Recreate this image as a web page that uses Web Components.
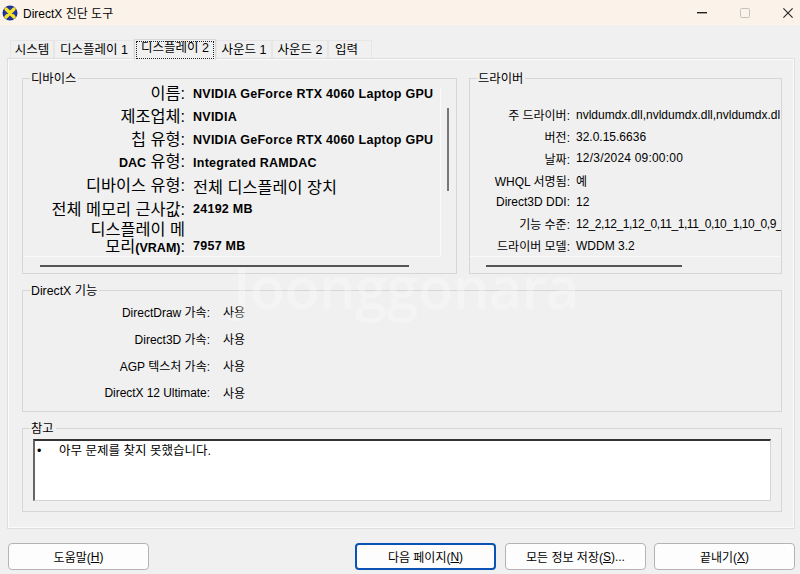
<!DOCTYPE html>
<html><head><meta charset="utf-8"><style>
html,body{margin:0;padding:0;background:#f0f0f0}
body{width:800px;height:574px;overflow:hidden;font:12px "Noto Sans CJK KR","Liberation Sans",sans-serif;color:#000}
</style></head><body>
<dx-window></dx-window>
<script>
const F='"Liberation Sans","Noto Sans CJK KR",sans-serif';
class Base extends HTMLElement{constructor(){super();this.attachShadow({mode:'open'}).innerHTML=this.constructor.html}}
class TitleBar extends Base{static html=`<style>
:host{display:flex;align-items:center;height:25px;background:#fbf3ea;font:12px ${F};color:#000}
svg{display:block}.ic{margin:0 5px 0 2px}.sp{flex:1}
</style>
<svg class="ic" width="16" height="16" viewBox="0 0 16 16"><circle cx="8" cy="8" r="7.5" fill="#1c2f8f"/><circle cx="8" cy="8" r="6" fill="#27399c"/><path d="M4 4 8 8l4-4M4 12 8 8l4 4" stroke="#f6e32a" stroke-width="3.4" fill="none" stroke-linecap="round"/></svg>
<span>DirectX 진단 도구</span><span class="sp"></span>
<svg width="10" height="2" viewBox="0 0 10 2" style="margin-right:33px"><rect width="10" height="1.4" fill="#222"/></svg>
<svg width="10" height="10" viewBox="0 0 10 10" style="margin-right:33px"><rect x=".5" y=".5" width="9" height="9" rx="1" fill="none" stroke="#c4c2be"/></svg>
<svg width="10" height="10" viewBox="0 0 10 10" style="margin-right:7px"><path d="M.4.4l9.2 9.2M9.6.4.4 9.6" stroke="#222" stroke-width="1.1"/></svg>`}
class TabBar extends Base{static html=`<style>
:host{display:flex;align-items:flex-end;height:20px;margin:14px 0 0 10px;font:12.5px ${F};color:#000;position:relative;z-index:1}
</style><slot></slot>`}
class TabItem extends Base{static html=`<style>
:host{display:block;height:18px;box-sizing:border-box;border:1px solid #e6e6e6;border-bottom:0;text-align:center;line-height:18px;background:#f0f0f0;margin-bottom:1px;white-space:nowrap}
:host([active]){height:21px;margin:0 0 -1px 0;border-color:#d8d8d8;padding:1px 1px 0}
span{display:block}
:host([active]) span{outline:1px dotted #222;outline-offset:-1px;height:18px;line-height:15px}
</style><span><slot></slot></span>`}
class TabPanel extends Base{static html=`<style>
:host{display:grid;grid-template-columns:435px 313px;column-gap:12px;grid-template-rows:196px 122px 84px;row-gap:16px;box-sizing:border-box;width:786px;height:469px;margin:0 0 0 8px;border:1px solid #fbfbfb;outline:1px solid #dedede;padding:18px 12px 0 13px}
</style><slot></slot>`}
class GroupBox extends Base{static html=`<style>
:host{display:block;position:relative;box-sizing:border-box;border:1px solid #d6d6d6;font:12px ${F};color:#000}
.l{position:absolute;left:7px;top:-7px;background:#f0f0f0;padding:0 2px 0 1px;font-size:12.3px;line-height:15px;white-space:nowrap}
</style><div class="l"></div><slot></slot>`;
connectedCallback(){this.shadowRoot.querySelector('.l').textContent=this.getAttribute('label')}}
class DeviceList extends Base{static html=`<style>
:host{display:block;height:100%;position:relative;overflow:hidden;font:12px ${F}}
.rows{display:grid;grid-template-columns:162px 1fr;column-gap:8px;grid-template-rows:repeat(6,23.1px) 34px;padding-top:3px;align-items:center}
.k{text-align:right;font-size:16.3px;white-space:nowrap;line-height:17px}
.k b{font-size:12.5px}
.v{font-weight:700;font-size:12.5px;letter-spacing:.26px;white-space:nowrap}
.v.h{font-weight:400;font-size:16.3px;letter-spacing:0}
.multi{line-height:17px;align-self:start}
.last{align-self:end;line-height:17px}
.sep{position:absolute;left:0;width:417px;bottom:16px;border-bottom:1px solid #fafafa}
.sepv{position:absolute;left:417px;top:8px;bottom:16px;border-left:1px solid #fafafa}
.vb{position:absolute;right:7px;top:29px;width:2px;height:83px;background:#777}
.hb{position:absolute;left:17px;width:369px;bottom:6px;height:2px;background:#555}
</style>
<div class="rows">
<div class="k">이름:</div><div class="v">NVIDIA GeForce RTX 4060 Laptop GPU</div>
<div class="k">제조업체:</div><div class="v">NVIDIA</div>
<div class="k">칩 유형:</div><div class="v">NVIDIA GeForce RTX 4060 Laptop GPU</div>
<div class="k"><b>DAC</b> 유형:</div><div class="v">Integrated RAMDAC</div>
<div class="k">디바이스 유형:</div><div class="v h">전체 디스플레이 장치</div>
<div class="k">전체 메모리 근사값:</div><div class="v">24192 MB</div>
<div class="k multi">디스플레이 메<br>모리<b>(VRAM)</b>:</div><div class="v last">7957 MB</div>
</div><div class="sep"></div><div class="sepv"></div><div class="vb"></div><div class="hb"></div>`}
class DriverList extends Base{static html=`<style>
:host{display:block;height:100%;position:relative;overflow:hidden;font:12px ${F}}
.rows{display:grid;grid-template-columns:100px 1fr;column-gap:6px;grid-auto-rows:21.8px;padding-top:25px;align-items:center}
.k{text-align:right;white-space:nowrap}.v{white-space:nowrap}
.sep{position:absolute;left:0;right:0;bottom:16px;border-bottom:1px solid #fafafa}
.hb{position:absolute;left:16px;width:196px;bottom:6px;height:2px;background:#555}
</style><div class="rows">
<div class="k">주 드라이버:</div><div class="v">nvldumdx.dll,nvldumdx.dll,nvldumdx.dl</div>
<div class="k">버전:</div><div class="v">32.0.15.6636</div>
<div class="k">날짜:</div><div class="v" style="letter-spacing:.2px">12/3/2024 09:00:00</div>
<div class="k">WHQL 서명됨:</div><div class="v">예</div>
<div class="k">Direct3D DDI:</div><div class="v">12</div>
<div class="k">기능 수준:</div><div class="v" style="letter-spacing:-.42px">12_2,12_1,12_0,11_1,11_0,10_1,10_0,9_</div>
<div class="k">드라이버 모델:</div><div class="v">WDDM 3.2</div>
</div><div class="sep"></div><div class="hb"></div>`}
class FeatureList extends Base{static html=`<style>
:host{display:grid;grid-template-columns:187px 1fr;column-gap:13px;grid-auto-rows:27.1px;align-items:center;padding-top:7px;font:12px ${F}}
.k{text-align:right}
</style>
<div class="k">DirectDraw 가속:</div><div>사용</div>
<div class="k">Direct3D 가속:</div><div>사용</div>
<div class="k">AGP 텍스처 가속:</div><div>사용</div>
<div class="k" style="letter-spacing:-.06px">DirectX 12 Ultimate:</div><div>사용</div>`}
class NoteBox extends Base{static html=`<style>
:host{box-sizing:border-box;width:738px;height:62px;margin:10px 0 0 10px;background:#fff;border:1px solid #d4d4d4;border-top:2px solid #333;border-left:2px solid #666;font:12.5px/20px ${F};display:flex}
.b{width:24px;padding-left:2px;box-sizing:border-box}
</style><span class="b">•</span><span>아무 문제를 찾지 못했습니다.</span>`}
class DxButton extends Base{static html=`<style>
:host{display:flex;align-items:center;justify-content:center;box-sizing:border-box;width:141px;height:27px;background:#fdfdfd;border:1px solid #b4b4b4;border-radius:4px;font:12px ${F};color:#000;white-space:nowrap}
:host([primary]){border:2px solid #0a52b4}
</style><slot></slot>`}
class ButtonRow extends Base{static html=`<style>
:host{display:flex;height:27px;margin:15px 5px 0 8px}
::slotted(:first-child){margin-right:206px}
::slotted(:nth-child(2)){margin-right:9px}
::slotted(:nth-child(3)){margin-right:8px}
</style><slot></slot>`}
class DxWatermark extends Base{static html=`<style>
:host{position:absolute;left:233px;top:252px;font:600 57.6px/70px "Open Sans","Liberation Sans",sans-serif;color:#fff;opacity:.3;letter-spacing:-.5px;pointer-events:none;white-space:nowrap}
</style>Joonggonara`}
class DxWindow extends Base{static html=`<style>:host{display:block;position:relative;width:800px;height:574px}</style>
<title-bar></title-bar>
<tab-bar><tab-item style="width:44px">시스템</tab-item><tab-item style="width:80px">디스플레이 1</tab-item><tab-item active style="width:82px">디스플레이 2</tab-item><tab-item style="width:56px">사운드 1</tab-item><tab-item style="width:56px">사운드 2</tab-item><tab-item style="width:44px;padding-right:7px;box-sizing:border-box">입력</tab-item></tab-bar>
<tab-panel>
<group-box label="디바이스"><device-list></device-list></group-box>
<group-box label="드라이버"><driver-list></driver-list></group-box>
<group-box label="DirectX 기능" style="grid-column:1/3"><feature-list></feature-list></group-box>
<group-box label="참고" style="grid-column:1/3"><note-box></note-box></group-box>
</tab-panel>
<button-row><dx-button>도움말(<u>H</u>)</dx-button><dx-button primary>다음 페이지(<u>N</u>)</dx-button><dx-button>모든 정보 저장(<u>S</u>)...</dx-button><dx-button>끝내기(<u>X</u>)</dx-button></button-row>
<dx-watermark></dx-watermark>`}
for(const [n,c] of Object.entries({'title-bar':TitleBar,'tab-bar':TabBar,'tab-item':TabItem,'tab-panel':TabPanel,'group-box':GroupBox,'device-list':DeviceList,'driver-list':DriverList,'feature-list':FeatureList,'note-box':NoteBox,'dx-button':DxButton,'button-row':ButtonRow,'dx-watermark':DxWatermark,'dx-window':DxWindow}))customElements.define(n,c);
</script></body></html>
